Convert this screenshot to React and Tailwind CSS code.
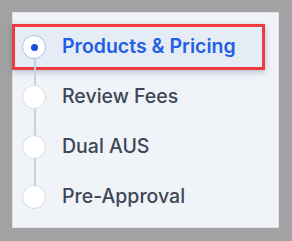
import React from 'react';

const steps = [
  { label: 'Products & Pricing', active: true },
  { label: 'Review Fees' },
  { label: 'Dual AUS' },
  { label: 'Pre-Approval' },
];

const StepDot = ({ active }) => (
  <div
    className={
      'relative z-10 w-[24px] h-[24px] rounded-full bg-white flex items-center justify-center flex-shrink-0 ' +
      (active ? 'border-[1.5px] border-[#a9c1ee]' : 'border-[1.5px] border-[#d5dce8]')
    }
  >
    {active && <div className="w-[7px] h-[7px] rounded-full bg-[#1d4ed8]"></div>}
  </div>
);

const App = () => {
  return (
    <div
      className="w-[292px] h-[241px] bg-[#a2a2a2] pt-[12px] pl-[12px]"
      style={{ fontFamily: 'Inter, "Noto Sans", sans-serif' }}
    >
      <div className="w-[267px] h-[216px] bg-[#f0f4f9] border border-[#dfe3e8] pt-[9px]">
        <div className="relative">
          {/* connector line */}
          <div className="absolute left-[21px] top-[25px] h-[150px] w-[1.5px] bg-[#c9d1dd]"></div>
          {steps.map((s) =>
            s.active ? (
              <div key={s.label} className="h-[50px] flex items-center -ml-px">
                <div className="w-[253px] h-[46px] border-[3px] border-[#ef3b3f] bg-[#e6ecf5] shadow-[0_2px_6px_rgba(60,80,120,0.35)] flex items-center pl-[7px]">
                  <StepDot active />
                  <span className="ml-[16px] text-[19.5px] font-semibold text-[#1f5fe6] leading-none">{s.label}</span>
                </div>
              </div>
            ) : (
              <div key={s.label} className="h-[50px] flex items-center pl-[9px]">
                <StepDot />
                <span className="ml-[16px] text-[19.5px] font-medium text-[#3d4756] leading-none">{s.label}</span>
              </div>
            )
          )}
        </div>
      </div>
    </div>
  );
};

export default App;
